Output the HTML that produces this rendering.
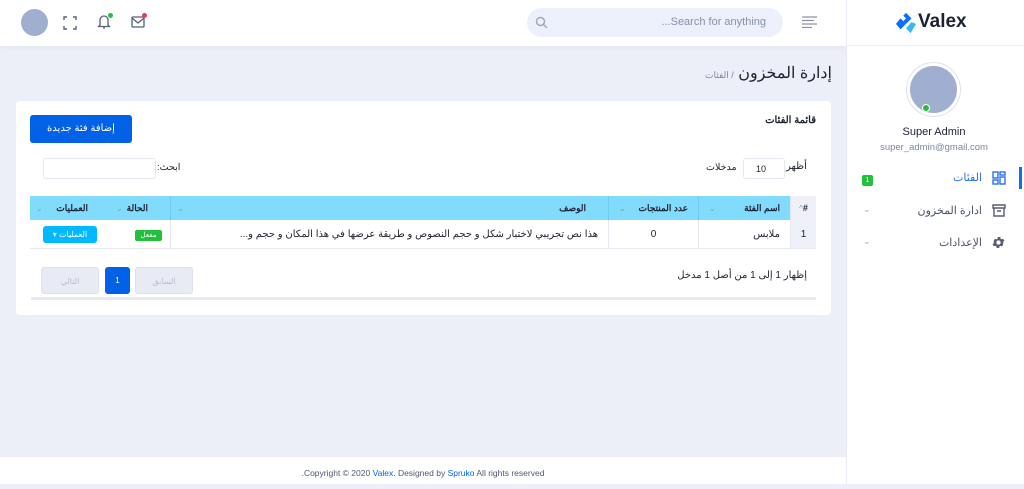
<!DOCTYPE html>
<html><head><meta charset="utf-8"><style>
*{box-sizing:border-box;margin:0;padding:0}
body{width:1024px;height:484px;overflow:hidden;background:#eceff8;font-family:"Liberation Sans","Noto Sans CJK SC",sans-serif;position:relative;color:#22252f}
.abs{position:absolute}
.hdr{left:0;top:0;width:846px;height:46px;background:#fff;box-shadow:0 2px 6px rgba(0,0,0,.04)}
.side{left:846px;top:0;width:178px;height:484px;background:#fff;border-left:1px solid #e8ebf3}
.foot{left:0;top:457px;width:846px;height:27px;background:#fff;font-size:8.5px;color:#4d5875;text-align:center;line-height:32px}
.card{left:16px;top:101px;width:815px;height:214px;background:#fff;border-radius:4px}
.th,.td{position:absolute;font-size:9px;display:flex;align-items:center}
.th{top:196px;height:24px;background:#80dbfd;font-weight:bold;color:#1f2233;border-left:1px solid #6ccbf0}
.td{top:220px;height:29px;border-left:1px solid #e6e8f0;border-bottom:1px solid #e6e8f0;font-size:10px}
.car{color:#8a96b0;font-size:8px;font-weight:normal}
</style></head><body>
<div class="abs hdr"></div>
<div class="abs" style="left:21px;top:9px;width:27px;height:27px;border-radius:50%;background:#a0aecf"></div>
<svg class="abs" style="left:63px;top:16px" width="14" height="14" viewBox="0 0 14 14" fill="none" stroke="#55607a" stroke-width="1.4"><path d="M1 4V1h3M10 1h3v3M13 10v3h-3M4 13H1v-3"/></svg>
<svg class="abs" style="left:97px;top:14px" width="14" height="16" viewBox="0 0 14 16" fill="none" stroke="#55607a" stroke-width="1.3"><path d="M3 11V6a4 4 0 018 0v5l1.5 1.5h-11z M6 14h2"/></svg>
<div class="abs" style="left:108px;top:13px;width:5px;height:5px;border-radius:50%;background:#22c03c"></div>
<svg class="abs" style="left:131px;top:15px" width="14" height="13" viewBox="0 0 14 13" fill="none" stroke="#55607a" stroke-width="1.3"><rect x="1" y="2" width="12" height="10" rx="1"/><path d="M1 3l6 5 6-5"/></svg>
<div class="abs" style="left:142px;top:13px;width:5px;height:5px;border-radius:50%;background:#ee335e"></div>
<div class="abs" style="left:527px;top:8px;width:256px;height:29px;border-radius:15px;background:#ecf0fa"></div>
<svg class="abs" style="left:535px;top:16px" width="13" height="13" viewBox="0 0 13 13" fill="none" stroke="#a0a8bd" stroke-width="1.5"><circle cx="5.5" cy="5.5" r="4"/><path d="M8.5 8.5l3.5 3.5"/></svg>
<div class="abs" style="left:640px;top:16px;width:126px;font-size:11px;color:#8590a8;text-align:right">...Search for anything</div>
<svg class="abs" style="left:802px;top:16px" width="15" height="12" viewBox="0 0 15 12" stroke="#8a93a8" stroke-width="1.2"><path d="M0 1h15M0 4.5h12M0 8h15M0 11.5h10"/></svg>

<div class="abs side"></div>
<div class="abs" style="left:846px;top:45px;width:178px;height:1px;background:#eceff5"></div>
<svg class="abs" style="left:895px;top:12px" width="22" height="22" viewBox="0 0 24 24"><path d="M12 1l6 6-6 6-3-3 3-3-3-3z" fill="#0d6efd"/><path d="M6 7l6 6-6 6-5-6z" fill="#0d6efd"/><path d="M18 11l5 2-6 10-5-5z" fill="#38b6f5"/></svg>
<div class="abs" style="left:918px;top:11px;font-size:19px;font-weight:bold;color:#1c2231">Valex</div>
<div class="abs" style="left:907px;top:63px;width:53px;height:53px;border-radius:50%;background:#a0aecf;border:3px solid #fff;box-shadow:0 0 0 1px #dde1ea"></div>
<div class="abs" style="left:922px;top:104px;width:8px;height:8px;border-radius:50%;background:#22c03c;border:1px solid #fff"></div>
<div class="abs" style="left:846px;top:126px;width:176px;text-align:center;font-size:11px;color:#1c2231">Super Admin</div>
<div class="abs" style="left:846px;top:142px;width:176px;text-align:center;font-size:9.5px;color:#7d869c">super_admin@gmail.com</div>
<div class="abs" style="left:1019px;top:167px;width:3px;height:22px;background:#0d6efd"></div>
<svg class="abs" style="left:992px;top:171px" width="14" height="14" viewBox="0 0 14 14" fill="none" stroke="#2b6ef5" stroke-width="1.4"><rect x="1" y="1" width="5" height="6"/><rect x="8" y="1" width="5" height="3"/><rect x="1" y="9" width="5" height="4"/><rect x="8" y="6" width="5" height="7"/></svg>
<div class="abs" dir="rtl" style="left:940px;top:171px;width:42px;text-align:right;font-size:11px;color:#2b6ef5">الفئات</div>
<div class="abs" style="left:862px;top:175px;width:11px;height:11px;border-radius:2px;background:#22c03c;color:#fff;font-size:7px;text-align:center;line-height:11px">1</div>
<svg class="abs" style="left:992px;top:204px" width="14" height="13" viewBox="0 0 14 13" fill="none" stroke="#555e75" stroke-width="1.4"><path d="M1 1h12v3H1zM2 4v8h10V4M5 7h4"/></svg>
<div class="abs" dir="rtl" style="left:900px;top:204px;width:82px;text-align:right;font-size:11px;color:#4a5068">ادارة المخزون</div>
<div class="abs" style="left:863px;top:204px;font-size:9px;color:#aab">⌄</div>
<svg class="abs" style="left:991px;top:235px" width="15" height="15" viewBox="0 0 24 24"><path fill="#555e75" d="M19.4 13a7.5 7.5 0 000-2l2.1-1.6-2-3.5-2.5 1a7 7 0 00-1.7-1l-.4-2.7h-4l-.4 2.7a7 7 0 00-1.7 1l-2.5-1-2 3.5L4.6 11a7.5 7.5 0 000 2l-2.1 1.6 2 3.5 2.5-1a7 7 0 001.7 1l.4 2.7h4l.4-2.7a7 7 0 001.7-1l2.5 1 2-3.5zM12 15.5a3.5 3.5 0 110-7 3.5 3.5 0 010 7z"/></svg>
<div class="abs" dir="rtl" style="left:900px;top:236px;width:82px;text-align:right;font-size:11px;color:#4a5068">الإعدادات</div>
<div class="abs" style="left:863px;top:236px;font-size:9px;color:#aab">⌄</div>

<div class="abs" dir="rtl" style="left:600px;top:63px;width:232px;text-align:right;font-size:16px;color:#1c2231">إدارة المخزون <span style="font-size:9px;color:#7d869c">/ الفئات</span></div>
<div class="abs card"></div>
<div class="abs" dir="rtl" style="left:700px;top:115px;width:116px;text-align:right;font-size:10px;font-weight:bold;color:#1c2231">قائمة الفئات</div>
<div class="abs" style="left:30px;top:115px;width:102px;height:28px;background:#0162e8;border-radius:3px;color:#fff;font-size:10px;text-align:center;line-height:28px">إضافة فئة جديدة</div>
<div class="abs" style="left:786px;top:161px;font-size:10px">أظهر</div>
<div class="abs" style="left:743px;top:158px;width:42px;height:21px;border:1px solid #e4e7ef;border-radius:3px;font-size:9px;line-height:20px;padding-left:12px">10</div>
<div class="abs" style="left:706px;top:162px;font-size:9.5px">مدخلات</div>
<div class="abs" style="left:43px;top:158px;width:113px;height:21px;border:1px solid #e4e7ef;border-radius:3px"></div>
<div class="abs" dir="rtl" style="left:157px;top:162px;font-size:9.5px">ابحث:</div>

<div class="th" style="left:790px;width:26px;background:#eef0f8;justify-content:center;border-left:1px solid #e2e5ee"><span class="car">^</span>#</div>
<div class="th" style="left:698px;width:92px;justify-content:space-between;padding:0 10px"><span class="car">⌄</span>اسم الفئة</div>
<div class="th" style="left:608px;width:90px;justify-content:space-between;padding:0 10px"><span class="car">⌄</span>عدد المنتجات</div>
<div class="th" style="left:170px;width:438px;justify-content:space-between;padding:0 22px 0 6px"><span class="car">⌄</span>الوصف</div>
<div class="th" style="left:110px;width:60px;justify-content:space-between;padding:0 22px 0 6px;border-left:none"><span class="car">⌄</span>الحالة</div>
<div class="th" style="left:30px;width:80px;justify-content:space-between;padding:0 22px 0 6px;border-left:none"><span class="car">⌄</span>العمليات</div>

<div class="td" style="left:790px;width:26px;background:#eef0f8;justify-content:center">1</div>
<div class="td" style="left:698px;width:92px;justify-content:flex-end;padding-right:10px">ملابس</div>
<div class="td" style="left:608px;width:90px;justify-content:center">0</div>
<div class="td" dir="rtl" style="left:170px;width:438px;justify-content:flex-start;padding-right:10px;white-space:nowrap;overflow:hidden">هذا نص تجريبي لاختبار شكل و حجم النصوص و طريقة عرضها في هذا المكان و حجم و...</div>
<div class="td" style="left:30px;width:140px;border-left:none"></div>
<div class="abs" style="left:135px;top:230px;width:27px;height:11px;background:#22c03c;border-radius:2px;color:#fff;font-size:7px;text-align:center;line-height:11px">مفعل</div>
<div class="abs" dir="rtl" style="left:43px;top:226px;width:54px;height:17px;background:#00b9ff;border-radius:3px;color:#fff;font-size:8px;text-align:center;line-height:17px">العمليات ▾</div>

<div class="abs" dir="rtl" style="left:560px;top:270px;width:247px;text-align:right;font-size:10px">إظهار 1 إلى 1 من أصل 1 مدخل</div>
<div class="abs" style="left:41px;top:267px;width:58px;height:27px;background:#e8ebf4;border:1px solid #dde1ec;border-radius:3px;color:#b6bccd;font-size:8px;text-align:center;line-height:27px">التالي</div>
<div class="abs" style="left:105px;top:267px;width:25px;height:27px;background:#0162e8;border-radius:3px;color:#fff;font-size:8px;text-align:center;line-height:27px">1</div>
<div class="abs" style="left:135px;top:267px;width:58px;height:27px;background:#e8ebf4;border:1px solid #dde1ec;border-radius:3px;color:#b6bccd;font-size:8px;text-align:center;line-height:27px">السابق</div>
<div class="abs" style="left:31px;top:297px;width:785px;height:3px;background:#e6e9f1"></div>

<div class="abs foot">.Copyright © 2020 <span style="color:#0162e8">Valex</span>. Designed by <span style="color:#0162e8">Spruko</span> All rights reserved</div>
</body></html>
